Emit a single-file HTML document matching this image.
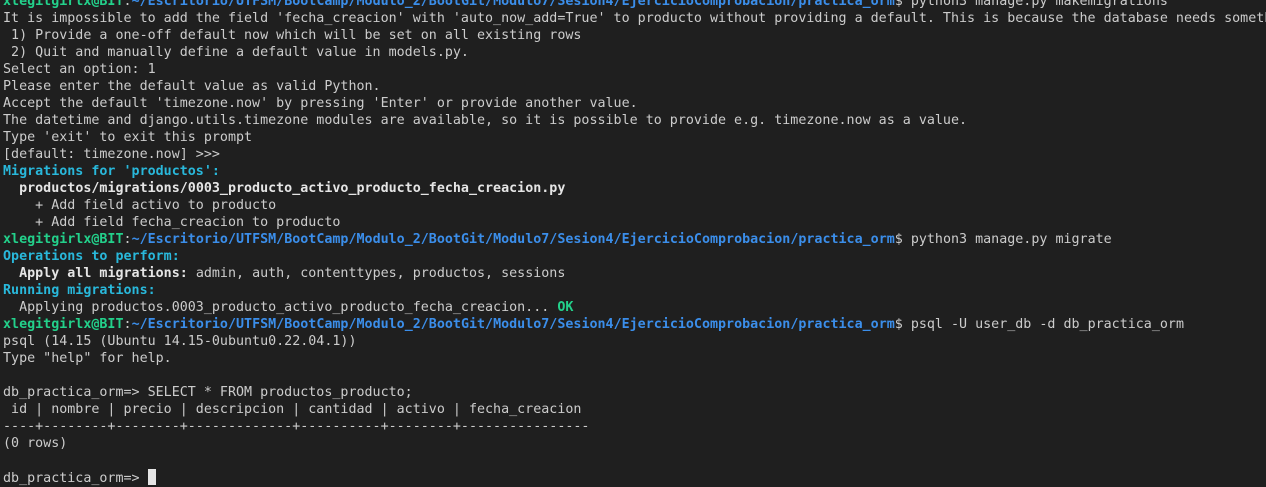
<!DOCTYPE html>
<html><head><meta charset="utf-8"><style>
html,body{margin:0;padding:0;background:#1f1f1f;width:1266px;height:487px;overflow:hidden;position:relative}
pre{margin:0;position:absolute;left:3px;top:-7px;width:1263px;overflow:hidden;font-family:"DejaVu Sans Mono","Liberation Mono",monospace;font-size:13.35px;line-height:17px;color:#cccccc;white-space:pre}
.g{color:#23d18b;font-weight:bold}
.b{color:#3b8eea;font-weight:bold}
.c{color:#29b8db;font-weight:bold}
.w{color:#e5e5e5;font-weight:bold}
.ok{color:#23d18b;font-weight:bold}
.cur{display:inline-block;width:8px;height:16px;background:#e5e5e5;vertical-align:-3px}
</style></head><body><pre><span class="g">xlegitgirlx@BIT</span>:<span class="b">~/Escritorio/UTFSM/BootCamp/Modulo_2/BootGit/Modulo7/Sesion4/EjercicioComprobacion/practica_orm</span>$ python3 manage.py makemigrations
It is impossible to add the field 'fecha_creacion' with 'auto_now_add=True' to producto without providing a default. This is because the database needs someth
 1) Provide a one-off default now which will be set on all existing rows
 2) Quit and manually define a default value in models.py.
Select an option: 1
Please enter the default value as valid Python.
Accept the default 'timezone.now' by pressing 'Enter' or provide another value.
The datetime and django.utils.timezone modules are available, so it is possible to provide e.g. timezone.now as a value.
Type 'exit' to exit this prompt
[default: timezone.now] &gt;&gt;&gt;
<span class="c">Migrations for 'productos':</span>
  <span class="w">productos/migrations/0003_producto_activo_producto_fecha_creacion.py</span>
    + Add field activo to producto
    + Add field fecha_creacion to producto
<span class="g">xlegitgirlx@BIT</span>:<span class="b">~/Escritorio/UTFSM/BootCamp/Modulo_2/BootGit/Modulo7/Sesion4/EjercicioComprobacion/practica_orm</span>$ python3 manage.py migrate
<span class="c">Operations to perform:</span>
  <span class="w">Apply all migrations:</span> admin, auth, contenttypes, productos, sessions
<span class="c">Running migrations:</span>
  Applying productos.0003_producto_activo_producto_fecha_creacion... <span class="ok">OK</span>
<span class="g">xlegitgirlx@BIT</span>:<span class="b">~/Escritorio/UTFSM/BootCamp/Modulo_2/BootGit/Modulo7/Sesion4/EjercicioComprobacion/practica_orm</span>$ psql -U user_db -d db_practica_orm
psql (14.15 (Ubuntu 14.15-0ubuntu0.22.04.1))
Type "help" for help.

db_practica_orm=&gt; SELECT * FROM productos_producto;
 id | nombre | precio | descripcion | cantidad | activo | fecha_creacion
----+--------+--------+-------------+----------+--------+----------------
(0 rows)

db_practica_orm=&gt; <span class="cur"></span></pre></body></html>
